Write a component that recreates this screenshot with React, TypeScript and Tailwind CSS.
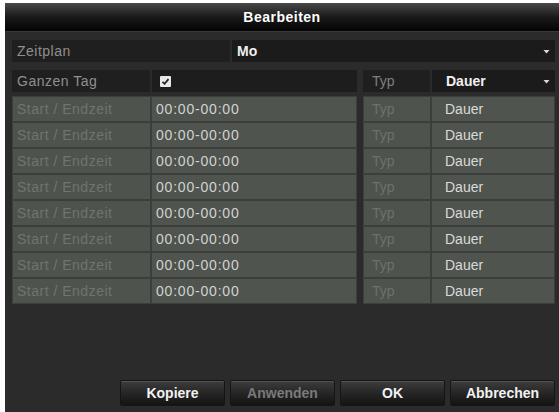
import React from 'react';

const rows = Array.from({ length: 8 });

function Caret() {
  return (
    <svg width="7" height="5" viewBox="0 0 7 5" className="shrink-0">
      <path d="M0.5 1 L6.5 1 L3.5 4.5 Z" fill="#d8d8d8" />
    </svg>
  );
}

function Check() {
  return (
    <div className="w-[11px] h-[11px] bg-[#e8e8e8] rounded-[1px] flex items-center justify-center">
      <svg width="9" height="9" viewBox="0 0 9 9">
        <path d="M1.5 4.8 L3.6 6.8 L7.5 2.2" stroke="#222" strokeWidth="1.8" fill="none" />
      </svg>
    </div>
  );
}

function Btn({ label, disabled }: { label: string; disabled?: boolean }) {
  return (
    <button
      className={
        'w-[105px] h-[26px] rounded-[2px] border border-[#151515] bg-gradient-to-b from-[#3d3d3d] via-[#262626] to-[#141414] text-[14px] font-bold shadow-[inset_0_1px_0_rgba(255,255,255,0.12)] ' +
        (disabled ? 'text-[#7a7a7a]' : 'text-[#f2f2f2]')
      }
    >
      {label}
    </button>
  );
}

export default function App() {
  return (
    <div
      className="w-[559px] h-[412px] bg-white pl-[5px] pt-[3px] flex flex-col overflow-hidden"
      style={{ fontFamily: '"Liberation Sans", Arial, sans-serif' }}
    >
      <div className="flex-1 bg-[#2b2b2b] flex flex-col">
        {/* title */}
        <div className="h-[29px] bg-gradient-to-b from-[#4a4a4a] via-[#1a1a1a] to-[#050505] flex items-center justify-center border-b border-[#3a3a3a]">
          <span className="text-[14px] font-bold text-white tracking-[0.5px]">Bearbeiten</span>
        </div>

        <div className="flex-1 flex flex-col pl-[7px] pr-[4px] pt-[8px] pb-[6px]">
          {/* Zeitplan */}
          <div className="h-[22px] flex gap-[2px] text-[14px]">
            <div className="w-[218px] bg-[#1f1f1f] flex items-center pl-[5px] text-[#8f8f8f] tracking-[0.5px]">
              Zeitplan
            </div>
            <div className="flex-1 bg-[#1b1b1b] flex items-center justify-between pl-[5px] pr-[5px]">
              <span className="text-[#f0f0f0] font-bold">Mo</span>
              <Caret />
            </div>
          </div>

          {/* Ganzen Tag */}
          <div className="h-[22px] mt-[8px] flex text-[14px]">
            <div className="w-[345px] flex gap-[2px]">
              <div className="w-[138px] bg-[#1f1f1f] flex items-center pl-[5px] text-[#8f8f8f] tracking-[0.5px]">
                Ganzen Tag
              </div>
              <div className="flex-1 bg-[#1d1d1d] flex items-center pl-[8px]">
                <Check />
              </div>
            </div>
            <div className="flex-1 ml-[6px] flex gap-[2px]">
              <div className="w-[67px] bg-[#1f1f1f] flex items-center pl-[9px] text-[#7f7f7f]">Typ</div>
              <div className="flex-1 bg-[#1b1b1b] flex items-center justify-between pl-[14px] pr-[5px]">
                <span className="text-[#f0f0f0] font-bold">Dauer</span>
                <Caret />
              </div>
            </div>
          </div>

          {/* schedule rows */}
          <div className="mt-[4px] flex">
            <div className="w-[345px] flex flex-col gap-[2px] bg-[#3b3e3a] p-[1px]">
              {rows.map((_, i) => (
                <div key={i} className="h-[24px] flex gap-[2px] text-[14px]">
                  <div className="w-[137px] bg-[#4e534d] flex items-center pl-[4px] text-[#6f756d] tracking-[0.5px]">
                    Start / Endzeit
                  </div>
                  <div className="flex-1 bg-[#4f544e] flex items-center pl-[4px] text-[#d2d2d2] tracking-[0.8px]">
                    00:00-00:00
                  </div>
                </div>
              ))}
            </div>
            <div className="flex-1 ml-[6px] flex flex-col gap-[2px] bg-[#3b3e3a] p-[1px]">
              {rows.map((_, i) => (
                <div key={i} className="h-[24px] flex gap-[2px] text-[14px]">
                  <div className="w-[66px] bg-[#4e534d] flex items-center pl-[8px] text-[#6c726a]">Typ</div>
                  <div className="flex-1 bg-[#4f544e] flex items-center pl-[13px] text-[#dadada]">Dauer</div>
                </div>
              ))}
            </div>
          </div>

          {/* buttons */}
          <div className="mt-auto flex justify-end gap-[5px] pr-[0px]">
            <Btn label="Kopiere" />
            <Btn label="Anwenden" disabled />
            <Btn label="OK" />
            <Btn label="Abbrechen" />
          </div>
        </div>
      </div>
    </div>
  );
}
